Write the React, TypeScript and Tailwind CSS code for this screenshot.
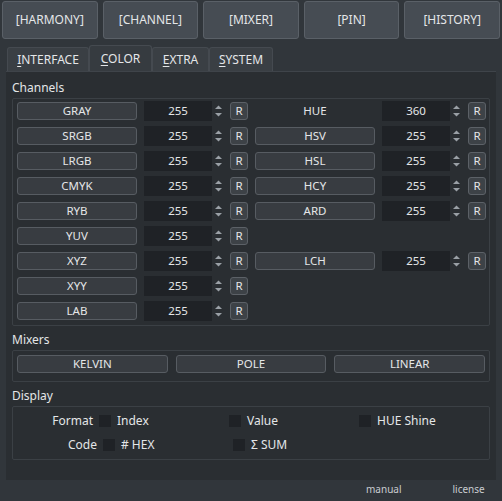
import React from 'react';

const font = { fontFamily: '"Noto Sans", "Open Sans", sans-serif' };

const topButtons = ['[HARMONY]', '[CHANNEL]', '[MIXER]', '[PIN]', '[HISTORY]'];

const tabs = [
  { first: 'I', rest: 'NTERFACE', w: 'w-[82px]' },
  { first: 'C', rest: 'OLOR', w: 'w-[63px]', active: true },
  { first: 'E', rest: 'XTRA', w: 'w-[57px]' },
  { first: 'S', rest: 'YSTEM', w: 'w-[64px]' },
];

type Channel = { name: string; value: number; plain?: boolean } | null;

const leftChannels: Channel[] = [
  { name: 'GRAY', value: 255 },
  { name: 'SRGB', value: 255 },
  { name: 'LRGB', value: 255 },
  { name: 'CMYK', value: 255 },
  { name: 'RYB', value: 255 },
  { name: 'YUV', value: 255 },
  { name: 'XYZ', value: 255 },
  { name: 'XYY', value: 255 },
  { name: 'LAB', value: 255 },
];

const rightChannels: Channel[] = [
  { name: 'HUE', value: 360, plain: true },
  { name: 'HSV', value: 255 },
  { name: 'HSL', value: 255 },
  { name: 'HCY', value: 255 },
  { name: 'ARD', value: 255 },
  null,
  { name: 'LCH', value: 255 },
  null,
  null,
];

const SpinArrows = () => (
  <svg width="11" height="18" viewBox="0 0 11 18" className="ml-[1px]">
    <path d="M2 7 L5.5 3.5 L9 7 Z" fill="#9aa0a6" />
    <path d="M2 11 L5.5 14.5 L9 11 Z" fill="#9aa0a6" />
  </svg>
);

const ChannelRow: React.FC<{ channel: Channel }> = ({ channel }) => {
  if (!channel) return <div className="h-[20px] w-[231px]" />;
  return (
    <div className="flex h-[20px] w-[231px] items-center">
      {channel.plain ? (
        <div className="flex h-[18px] w-[120px] items-center justify-center">{channel.name}</div>
      ) : (
        <div className="flex h-[18px] w-[120px] items-center justify-center rounded-[3px] border border-[#575c62] bg-[#383c41]">
          {channel.name}
        </div>
      )}
      <div className="ml-[7px] flex h-[20px] w-[68px] items-center justify-center bg-[#1f2226]">
        {channel.value}
      </div>
      <SpinArrows />
      <div className="ml-[6px] flex h-[18px] w-[18px] items-center justify-center rounded-[3px] border border-[#5c6167] bg-[#3d4247]">
        R
      </div>
    </div>
  );
};

const Check: React.FC<{ label: string }> = ({ label }) => (
  <div className="flex w-[130px] items-center">
    <div className="h-[12px] w-[12px] bg-[#1f2226]" />
    <span className="ml-[6px]">{label}</span>
  </div>
);

export default function App() {
  return (
    <div
      className="flex h-[501px] w-[502px] flex-col bg-[#31363b] text-[11.5px] text-[#e4e6e8]"
      style={font}
    >
      <div className="flex gap-[5px] px-[2px] pt-[1px]">
        {topButtons.map((b) => (
          <div
            key={b}
            className="flex h-[38px] w-[96px] items-center justify-center rounded-[3px] border border-[#5a6067] bg-[#464c53] text-[12px]"
          >
            {b}
          </div>
        ))}
      </div>

      <div className="mt-[6px] flex items-end px-[7px]">
        {tabs.map((t) => (
          <div
            key={t.first}
            className={`flex items-center justify-center rounded-t-[3px] border border-b-0 text-[12px] ${t.w} ${
              t.active
                ? 'h-[26px] border-[#454a50] bg-[#363b40]'
                : 'h-[24px] border-[#454a50] bg-[#3a3f44]'
            }`}
          >
            <span>
              <span className="underline underline-offset-2">{t.first}</span>
              {t.rest}
            </span>
          </div>
        ))}
      </div>

      <div className="mx-[6px] flex h-[409px] flex-col border-t border-[#3f444a] bg-[#2a2e32] px-[6px] pt-[6px]">
        <div className="h-[20px] text-[12px] leading-[20px]">Channels</div>
        <div className="flex h-[228px] gap-[7px] rounded-[2px] border border-[#3b4045] pl-[4px] pt-[2px]">
          <div className="flex flex-col gap-[5px]">
            {leftChannels.map((c, i) => (
              <ChannelRow key={i} channel={c} />
            ))}
          </div>
          <div className="flex flex-col gap-[5px]">
            {rightChannels.map((c, i) => (
              <ChannelRow key={i} channel={c} />
            ))}
          </div>
        </div>

        <div className="mt-[4px] h-[20px] text-[12px] leading-[20px]">Mixers</div>
        <div className="grid h-[32px] grid-cols-3 gap-[8px] rounded-[2px] border border-[#3b4045] px-[4px] pt-[4px]">
          {['KELVIN', 'POLE', 'LINEAR'].map((m) => (
            <div
              key={m}
              className="flex h-[18px] items-center justify-center rounded-[3px] border border-[#575c62] bg-[#383c41]"
            >
              {m}
            </div>
          ))}
        </div>

        <div className="mt-[4px] h-[20px] text-[12px] leading-[20px]">Display</div>
        <div className="flex h-[54px] flex-col justify-center rounded-[2px] border border-[#3b4045] text-[12px]">
          <div className="flex h-[24px] items-center">
            <div className="w-[84px] text-right">Format</div>
            <div className="ml-[6px] flex">
              <Check label="Index" />
              <Check label="Value" />
              <Check label="HUE Shine" />
            </div>
          </div>
          <div className="flex h-[24px] items-center">
            <div className="w-[84px] text-right">Code</div>
            <div className="ml-[6px] flex">
              <Check label="# HEX" />
              <Check label="Σ SUM" />
            </div>
          </div>
        </div>
      </div>

      <div className="flex h-[18px] items-center text-[10px] text-[#c9ccd0]">
        <span className="ml-[366px]">manual</span>
        <span className="ml-[51px]">license</span>
      </div>
    </div>
  );
}
